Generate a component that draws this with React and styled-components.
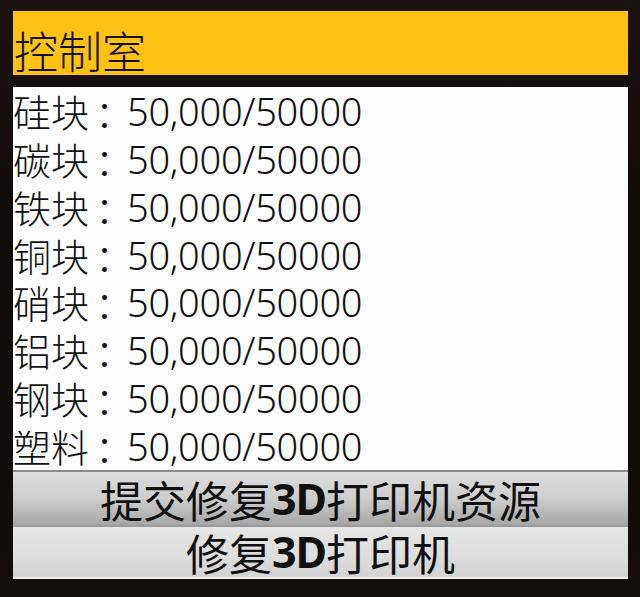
import React from 'react'
import styled, { createGlobalStyle } from 'styled-components'

const resources = ['硅块', '碳块', '铁块', '铜块', '硝块', '铝块', '钢块', '塑料']

const Global = createGlobalStyle`
html, body {
    margin: 0;
    padding: 0;
    background: #120c0a;
}
body {
    font-family: "Noto Sans CJK SC", "Noto Sans", sans-serif;
}
`

function App() {
    return (
        <Screen>
            <Global />
            <Header><Title>控制室</Title></Header>
            <Panel>
                <List>
                    {resources.map((name) => (
                        <Row key={name}>
                            <Name>{name}</Name>
                            <Colon>：</Colon>
                            <Amount>50,000/50000</Amount>
                        </Row>
                    ))}
                </List>
                <Button pressed>提交修复<Latin>3D</Latin>打印机资源</Button>
                <Button>修复<Latin>3D</Latin>打印机</Button>
            </Panel>
        </Screen>
    )
}

export default App

const Screen = styled.div`
width: 640px;
min-height: 597px;
box-sizing: border-box;
padding: 11px 12px 16px 13px;
display: flex;
flex-direction: column;
gap: 12px;
background: linear-gradient(180deg, #1c1311 0%, #100a08 40%, #140d0a 100%);
`
const Header = styled.div`
height: 64px;
box-sizing: border-box;
background: #fec214;
display: flex;
align-items: flex-end;
padding: 0 0 2px 1px;
`
const Title = styled.span`
color: #111;
font-size: 44px;
font-weight: 300;
line-height: 46px;
`
const Panel = styled.div`
background: #fdfdff;
display: flex;
flex-direction: column;
`
const List = styled.div`
display: flex;
flex-direction: column;
height: 383px;
`
const Row = styled.div`
height: 47.875px;
display: flex;
align-items: center;
font-size: 38px;
font-weight: 300;
color: #111;
line-height: 40px;
`
const Name = styled.span``
const Colon = styled.span`
padding-left: 6px;
letter-spacing: -6px;
`
const Amount = styled.span`
font-family: "Noto Sans", sans-serif;
font-weight: 300;
letter-spacing: -0.3px;
`
const Button = styled.div`
height: ${props => props.pressed ? '55px' : '54px'};
box-sizing: border-box;
display: flex;
align-items: center;
justify-content: center;
font-size: 43px;
font-weight: 400;
line-height: 48px;
color: #111;
border-top: 2px solid ${props => props.pressed ? '#8c8c8c' : '#9a9a9a'};
background: ${props => props.pressed
        ? 'linear-gradient(180deg, #dedede 0%, #cdcdcd 50%, #a6a6a6 100%)'
        : 'linear-gradient(180deg, #e6e6e6 0%, #dddddd 60%, #d2d2d2 100%)'};
border-bottom: ${props => props.pressed ? 'none' : '2px solid #ececec'};
`
const Latin = styled.span`
font-family: "Noto Sans", sans-serif;
font-weight: 700;
letter-spacing: -1px;
`
